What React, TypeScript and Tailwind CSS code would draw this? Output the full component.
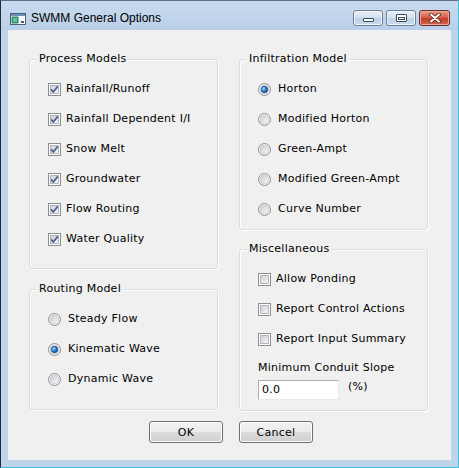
import React from 'react';

const CheckBox: React.FC<{ checked?: boolean }> = ({ checked }) => (
  <svg width="13" height="13" viewBox="0 0 13 13" className="shrink-0">
    <defs>
      <linearGradient id="cbfill" x1="0" y1="0" x2="1" y2="1">
        <stop offset="0" stopColor="#cbcfd5" />
        <stop offset="1" stopColor="#f7f7f7" />
      </linearGradient>
    </defs>
    <rect x="0.5" y="0.5" width="12" height="12" fill="#ffffff" stroke="#8e8f8f" />
    <rect x="2.5" y="2.5" width="8" height="8" fill="url(#cbfill)" stroke="#b3b7bd" />
    {checked && (
      <path d="M3.2 6.4 L5.3 9 L9.8 3.4" fill="none" stroke="#4a5f97" strokeWidth="1.7" strokeLinejoin="round" />
    )}
  </svg>
);

const Radio: React.FC<{ selected?: boolean }> = ({ selected }) => (
  <svg width="13" height="13" viewBox="0 0 13 13" className="shrink-0">
    <defs>
      <linearGradient id="rbfill" x1="0" y1="0" x2="1" y2="1">
        <stop offset="0" stopColor="#c6c9ce" />
        <stop offset="1" stopColor="#fbfbfb" />
      </linearGradient>
      <radialGradient id="rbdot" cx="0.35" cy="0.35" r="0.7">
        <stop offset="0" stopColor="#a7dcff" />
        <stop offset="0.5" stopColor="#2b8ad6" />
        <stop offset="1" stopColor="#0c4a8a" />
      </radialGradient>
    </defs>
    <circle cx="6.5" cy="6.5" r="6" fill="#f4f4f4" stroke="#8e8f8f" />
    <circle cx="6.5" cy="6.5" r="4.3" fill="url(#rbfill)" stroke="#c0c4ca" strokeWidth="0.8" />
    {selected && <circle cx="6.5" cy="6.5" r="3.2" fill="url(#rbdot)" stroke="#1d4f86" strokeWidth="0.8" />}
  </svg>
);

const Group: React.FC<{ title: string; className?: string; children: React.ReactNode }> = ({ title, className, children }) => (
  <div className={`relative border border-[#d5dfe5] rounded-[3px] shadow-[inset_1px_1px_0_#ffffff,1px_1px_0_#ffffff] ${className ?? ''}`}>
    <span className="absolute -top-[8px] left-[7px] bg-[#f0f0f0] px-[2px] leading-[14px]">{title}</span>
    <div className="pt-[14px] pl-[18px] flex flex-col">{children}</div>
  </div>
);

const CheckRow: React.FC<{ label: string; checked?: boolean }> = ({ label, checked }) => (
  <div className="h-[30px] flex items-center gap-[5px]">
    <CheckBox checked={checked} />
    <span>{label}</span>
  </div>
);

const RadioRow: React.FC<{ label: string; selected?: boolean }> = ({ label, selected }) => (
  <div className="h-[30px] flex items-center gap-[7px]">
    <Radio selected={selected} />
    <span>{label}</span>
  </div>
);

const WinButton: React.FC<{ label: string }> = ({ label }) => (
  <button className="w-[74px] h-[22px] rounded-[3px] border border-[#707070] bg-[linear-gradient(#f2f2f2_0%,#ebebeb_50%,#dddddd_51%,#cfcfcf_100%)] shadow-[inset_0_0_0_1px_#fcfcfc] text-black leading-none">
    {label}
  </button>
);

export default function App() {
  return (
    <div className="w-[459px] h-[468px] flex flex-col bg-[#bfd4eb] border-l border-t border-l-[#1e2a38] border-t-[#5e7187] border-r border-b border-r-[#3cbfd8] border-b-[#3cbfd8] font-['DejaVu_Sans',Verdana,sans-serif] text-[11px] tracking-[0.25px] text-black select-none">
      {/* title bar */}
      <div className="h-[29px] flex items-start bg-[linear-gradient(#c9dbef,#b9cfe9)] pl-[9px] pr-[8px]">
        <svg width="16" height="12" viewBox="0 0 16 12" className="mt-[12px] shrink-0">
          <rect x="0.5" y="0.5" width="15" height="11" fill="#ffffff" stroke="#4f5f6e" />
          <rect x="1" y="1" width="14" height="2" fill="#6a8fb8" />
          <rect x="1.5" y="3.5" width="7" height="7" fill="#2f8c72" />
          <rect x="3" y="5" width="4" height="4" fill="#5ec1a0" />
          <rect x="11" y="8" width="3" height="2" fill="#4f5f6e" />
        </svg>
        <span className="ml-[5px] mt-[10px] font-['Liberation_Sans',Arial,sans-serif] text-[12px] tracking-normal leading-[15px] text-black">SWMM General Options</span>
        <div className="ml-auto mt-[9px] flex gap-[3px]">
          <div className="w-[30px] h-[16px] rounded-[3px] border border-[#6d8099] bg-[linear-gradient(#e4edf7_0%,#d3e0ef_50%,#bcd0e7_51%,#c9dbef_100%)] shadow-[inset_0_0_0_1px_#f2f6fb] flex items-center justify-center">
            <div className="mt-[4px] w-[11px] h-[4px] rounded-[1px] bg-white border border-[#39475a]" />
          </div>
          <div className="w-[30px] h-[16px] rounded-[3px] border border-[#6d8099] bg-[linear-gradient(#e4edf7_0%,#d3e0ef_50%,#bcd0e7_51%,#c9dbef_100%)] shadow-[inset_0_0_0_1px_#f2f6fb] flex items-center justify-center">
            <div className="w-[11px] h-[8px] rounded-[1px] bg-white border border-[#39475a] flex items-center justify-center">
              <div className="w-[7px] h-[3px] mt-[1px] border border-[#39475a]" />
            </div>
          </div>
          <div className="w-[31px] h-[16px] rounded-[3px] border border-[#6b2a22] bg-[linear-gradient(#e89c8c_0%,#d5604c_45%,#c43c28_55%,#d0664c_100%)] shadow-[inset_0_0_0_1px_#eaa898] flex items-center justify-center">
            <svg width="12" height="10" viewBox="0 0 12 10">
              <path d="M2 1.5 L10 8.5 M10 1.5 L2 8.5" stroke="#5a2118" strokeWidth="3.6" strokeLinecap="round" />
              <path d="M2 1.5 L10 8.5 M10 1.5 L2 8.5" stroke="#ffffff" strokeWidth="2" strokeLinecap="round" />
            </svg>
          </div>
        </div>
      </div>

      {/* client area */}
      <div className="px-[7px] pb-[7px]">
        <div className="h-[430px] bg-[#f0f0f0] pt-[29px] pl-[21px] flex flex-col">
          <div className="grid grid-cols-[189px_189px] gap-x-[21px]">
            <div className="flex flex-col gap-[20px]">
              <Group title="Process Models" className="h-[210px]">
                <CheckRow label="Rainfall/Runoff" checked />
                <CheckRow label="Rainfall Dependent I/I" checked />
                <CheckRow label="Snow Melt" checked />
                <CheckRow label="Groundwater" checked />
                <CheckRow label="Flow Routing" checked />
                <CheckRow label="Water Quality" checked />
              </Group>
              <Group title="Routing Model" className="h-[121px]">
                <RadioRow label="Steady Flow" />
                <RadioRow label="Kinematic Wave" selected />
                <RadioRow label="Dynamic Wave" />
              </Group>
            </div>
            <div className="flex flex-col gap-[19px]">
              <Group title="Infiltration Model" className="h-[171px]">
                <RadioRow label="Horton" selected />
                <RadioRow label="Modified Horton" />
                <RadioRow label="Green-Ampt" />
                <RadioRow label="Modified Green-Ampt" />
                <RadioRow label="Curve Number" />
              </Group>
              <Group title="Miscellaneous" className="h-[162px]">
                <CheckRow label="Allow Ponding" />
                <CheckRow label="Report Control Actions" />
                <CheckRow label="Report Input Summary" />
                <div className="mt-[7px] leading-[14px]">Minimum Conduit Slope</div>
                <div className="mt-[5px] flex items-start gap-[9px]">
                  <div className="w-[81px] h-[20px] bg-white border border-[#e3e9ef] border-t-[#abadb3] border-l-[#abadb3] pl-[3px] flex items-center">0.0</div>
                  <span className="leading-[14px]">(%)</span>
                </div>
              </Group>
            </div>
          </div>
          <div className="mt-[10px] pl-[120px] flex gap-[16px]">
            <WinButton label="OK" />
            <WinButton label="Cancel" />
          </div>
        </div>
      </div>
    </div>
  );
}
